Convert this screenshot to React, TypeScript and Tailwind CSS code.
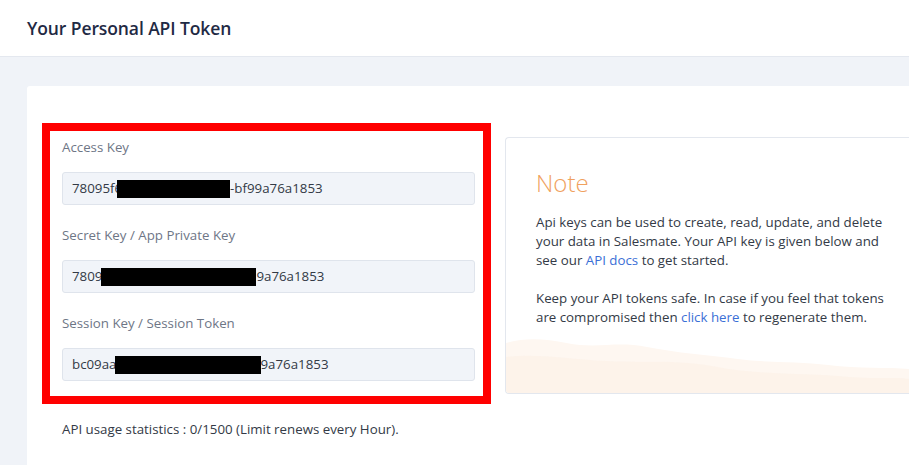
import React from "react";

interface TokenField {
  label: string;
  prefix: string;
  shift: number;
  hidden: number;
  suffix: string;
}

const FIELDS: TokenField[] = [
  { label: "Access Key", prefix: "78095f6", shift: -5, hidden: 113, suffix: "-bf99a76a1853" },
  { label: "Secret Key / App Private Key", prefix: "7809", shift: -1, hidden: 155, suffix: "9a76a1853" },
  { label: "Session Key / Session Token", prefix: "bc09aa", shift: -2, hidden: 146, suffix: "9a76a1853" },
];

function NoteWaves() {
  return (
    <svg
      className="absolute bottom-0 left-0 w-full h-[58px]"
      viewBox="0 0 400 58"
      preserveAspectRatio="none"
    >
      <path
        d="M0 8 C20 2 40 4 60 8 C90 14 110 6 140 12 C170 18 200 20 230 24 C260 28 290 26 320 30 C350 34 380 32 400 34 L400 58 L0 58 Z"
        fill="#fef7f1"
      />
      <path
        d="M0 22 C30 18 60 24 100 26 C140 28 170 24 210 32 C250 40 300 38 340 42 C370 44 390 42 400 44 L400 58 L0 58 Z"
        fill="#fcf0e6"
        opacity="0.6"
      />
    </svg>
  );
}

export default function App() {
  return (
    <div
      className="w-[909px] h-[465px] overflow-hidden bg-[#f0f3f8] text-[13.3px] text-[#333a46]"
      style={{ fontFamily: '"Open Sans", "Noto Sans", sans-serif' }}
    >
      {/* page header */}
      <div className="h-[57px] bg-white border-b border-[#e4e8ef] flex items-center pl-[27px]">
        <h1 className="text-[17.5px] font-semibold text-[#1f2a44] tracking-[-0.1px]">
          Your Personal API Token
        </h1>
      </div>

      <div className="pl-[27px] pt-[29px]">
        <div className="bg-white rounded-tl-[3px] h-[400px] pl-[15px] pt-[37px] flex gap-[14px]">
          {/* key fields */}
          <div className="w-[449px] shrink-0">
            <div className="border-[8px] border-[#ff0000] pl-[12px] pr-[8px] pt-[6px] pb-[15px]">
              {FIELDS.map((f, i) => (
                <div key={f.label} className={i > 0 ? "mt-[20px]" : ""}>
                  <div className="h-[20px] leading-[20px] text-[#6e7686]">{f.label}</div>
                  <div className="mt-[15px] h-[33px] rounded-[3px] border border-[#dfe4ec] bg-[#f1f4f9] pl-[9px] flex items-center text-[#333a46]">
                    <span>{f.prefix}</span>
                    <span
                      className="inline-block h-[18px] bg-black"
                      style={{ width: f.hidden, marginLeft: f.shift }}
                    />
                    <span>{f.suffix}</span>
                  </div>
                </div>
              ))}
            </div>
            <p className="mt-[16px] pl-[20px] text-[#333a46]">
              API usage statistics : 0/1500 (Limit renews every Hour).
            </p>
          </div>

          {/* note panel */}
          <div className="mt-[14px] flex-1 h-[257px] relative overflow-hidden rounded-l-[4px] border border-r-0 border-[#e3e7ee] bg-white pl-[30px] pt-[28px]">
            <NoteWaves />
            <div className="relative">
              <h2 className="text-[24px] font-light leading-[34px] text-[#f0a15e]">Note</h2>
              <div className="mt-[13px] leading-[19px] text-[#333a46]">
                <p>
                  Api keys can be used to create, read, update, and delete
                  <br />
                  your data in Salesmate. Your API key is given below and
                  <br />
                  see our <span className="text-[#3b6fd6]">API docs</span> to get started.
                </p>
                <p className="mt-[19px]">
                  Keep your API tokens safe. In case if you feel that tokens
                  <br />
                  are compromised then <span className="text-[#3b6fd6]">click here</span> to regenerate them.
                </p>
              </div>
            </div>
          </div>
        </div>
      </div>
    </div>
  );
}
